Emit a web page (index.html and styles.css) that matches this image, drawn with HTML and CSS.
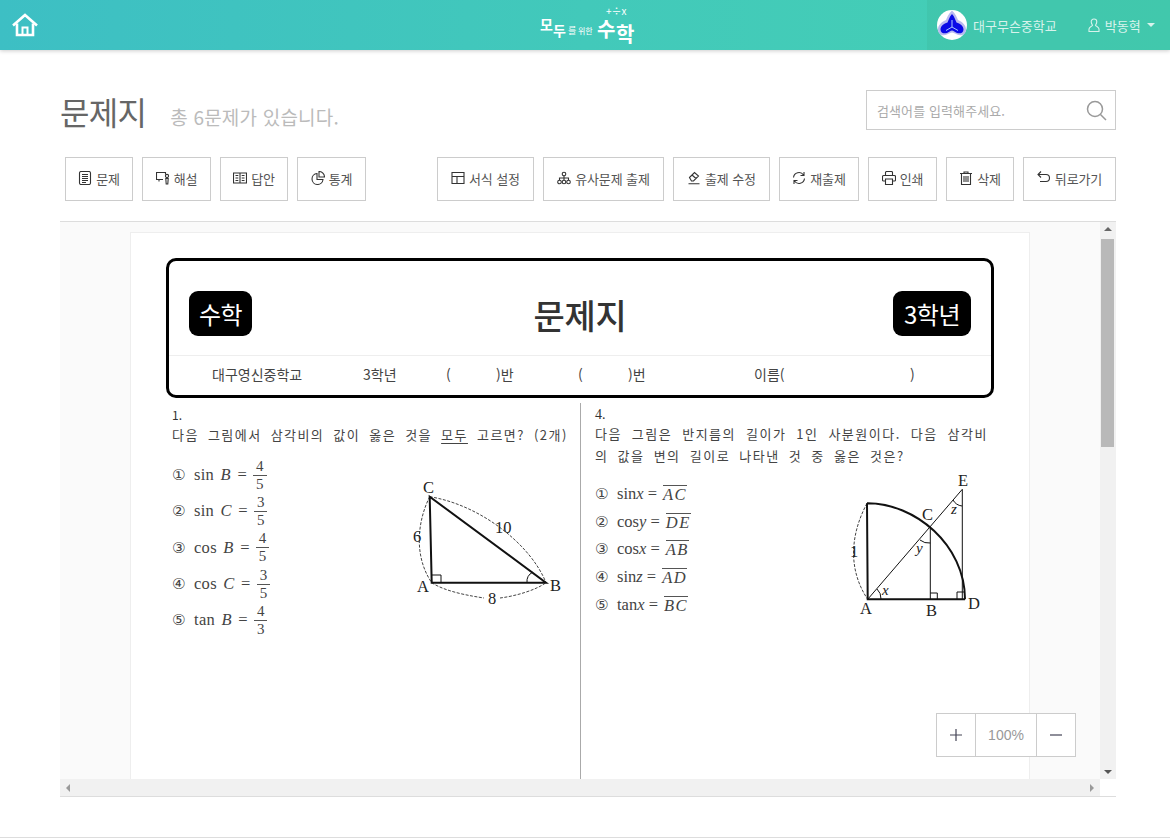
FILE: index.html
```html
<!DOCTYPE html>
<html lang="ko">
<head>
<meta charset="utf-8">
<title>문제지</title>
<link rel="stylesheet" href="styles.css">
</head>
<body>
<header class="topbar">
  <a class="home" aria-label="홈">
    <svg width="26" height="24" viewBox="0 0 26 24" fill="none" stroke="#fff" stroke-width="2.6" stroke-linejoin="miter"><path d="M1 12.500 13 2l12 10.500"/><path d="M5 10.500V22h16V10.500"/><path d="M10.500 22v-7.500h5V22" stroke-width="2"/></svg>
  </a>
  <div class="logo">
    <span class="logo-a1">모</span><span class="logo-a2">두</span><span class="logo-b">를</span><span class="logo-c">위한</span><span class="logo-d1">수</span><span class="logo-d2">학</span><span class="logo-e">+÷x</span>
  </div>
  <div class="account">
    <svg class="emblem" width="30" height="30" viewBox="0 0 30 30"><circle cx="15" cy="15" r="15" fill="#fff"/><path d="M15 .5c3.500 3 5 7 6 9.500 4 1.500 8 5 8 9.500 0 5-5 7-9 5-2-1-3.500-2-5-2s-3 1-5 2c-4 2-9 0-9-5 0-4.500 4-8 8-9.500 1-2.500 2.500-6.500 6-9.500z" fill="#b9b9ef"/><path d="M15 4c2.800 3 3.500 6.500 4.500 8.500 3.500 1 7 3.500 7 7 0 3.500-3.500 4.500-6.500 3.500-2-1-3.500-2.500-5-2.500s-3 1.500-5 2.500c-3 1-6.500 0-6.500-3.500 0-3.500 3.500-6 7-7C11.500 10.500 12.200 7 15 4z" fill="#0a0ae6"/><path d="M15 10v7M15 17l-6 3.500M15 17l6 3.500" stroke="#a8c8ff" stroke-width="1"/></svg>
    <span class="school">대구무슨중학교</span>
    <svg class="user-ic" width="12" height="15" viewBox="0 0 12 15" fill="none" stroke="#d8f3ec" stroke-width="1.100"><path d="M6 1c1.800 0 2.800 1.200 2.800 2.800 0 1.500-.8 2.600-1.300 3.400 0 .8 3.500 1.800 3.500 3.800v2.500H1V11c0-2 3.500-3 3.500-3.800C4 6.400 3.200 5.300 3.200 3.800 3.200 2.200 4.200 1 6 1z"/></svg>
    <span class="username">박동혁</span>
    <span class="caret"></span>
  </div>
</header>

<main class="page">
  <div class="title-row">
    <div class="title-group">
      <h1 class="title">문제지</h1>
      <span class="subtitle">총 6문제가 있습니다.</span>
    </div>
    <div class="search">
      <span class="search-text">검색어를 입력해주세요.</span>
      <svg width="21" height="21" viewBox="0 0 21 21" fill="none" stroke="#999" stroke-width="1.500"><circle cx="9" cy="9" r="7.500"/><path d="m14.500 14.500 5.500 5.500"/></svg>
    </div>
  </div>

  <div class="toolbar">
    <div class="btn-group group-left">
      <button class="btn"><svg class="ic" viewBox="0 0 14 14"><rect x="1.500" y=".5" width="11" height="13" rx="1.500"/><path d="M4 3.500h6M4 5.500h6M4 7.500h6M4 9.500h6M4 11.500h4"/></svg>문제</button>
      <button class="btn"><svg class="ic" viewBox="0 0 14 14"><path d="M7 8.500H.5v-7h9v2M3 8.500v2"/><circle cx="11" cy="5" r="1.600"/><path d="M9.800 7.500h2.400l-.4 5.500h-1.600z"/></svg>해설</button>
      <button class="btn"><svg class="ic" viewBox="0 0 14 14"><path d="M.5 2h13v10H.5zM7 2v10M2.500 4.500h2.800M2.500 7h2.800M2.500 9.500h2.800M8.700 4.500h2.800M8.700 7h2.800M8.700 9.500h2.800"/></svg>답안</button>
      <button class="btn"><svg class="ic" viewBox="0 0 14 14"><path d="M6 2.500A5.500 5.500 0 1 0 12 8.500H6zM8 .5v5.500h5.500A5.500 5.500 0 0 0 8 .5z"/></svg>통계</button>
    </div>
    <div class="btn-group group-right">
      <button class="btn"><svg class="ic" viewBox="0 0 14 14"><path d="M1 1.500h12v11H1zM1 5.500h12M6 5.500v7"/></svg>서식 설정</button>
      <button class="btn"><svg class="ic" viewBox="0 0 14 14"><circle cx="7" cy="3" r="1.800"/><path d="M7 4.800V7M2.500 9.300V7h9v2.300M7 7v2.300"/><circle cx="2.500" cy="11" r="1.800"/><circle cx="7" cy="11" r="1.800"/><circle cx="11.500" cy="11" r="1.800"/></svg>유사문제 출제</button>
      <button class="btn"><svg class="ic" viewBox="0 0 14 14"><path d="M2.500 6.500 7.500 1.500l4 3.500-5 5H4.500zM5 4l4 3.500M1.500 12.800h11"/></svg>출제 수정</button>
      <button class="btn"><svg class="ic" viewBox="0 0 14 14"><path d="M1.500 6.500A5.500 5.500 0 0 1 11.500 4M12.500 7.500A5.500 5.500 0 0 1 2.500 10M12 1v3.500H8.500M2 13V9.500h3.500"/></svg>재출제</button>
      <button class="btn"><svg class="ic" viewBox="0 0 14 14"><path d="M3.500 4.500v-3a1 1 0 0 1 1-1h5a1 1 0 0 1 1 1v3M3.500 10H1.500a1 1 0 0 1-1-1V5.500a1 1 0 0 1 1-1h11a1 1 0 0 1 1 1V9a1 1 0 0 1-1 1h-2M3.500 8h7v5.500h-7z"/></svg>인쇄</button>
      <button class="btn"><svg class="ic" viewBox="0 0 14 14"><path d="M1 2.500h12M5 2.500V1h4v1.500M2.500 2.500v11h9v-11M5 5v6M7 5v6M9 5v6"/></svg>삭제</button>
      <button class="btn"><svg class="ic" viewBox="0 0 14 14"><path d="M4 .5 1 3.500l3 3M1 3.500h8a3.500 3.500 0 0 1 0 7H3"/></svg>뒤로가기</button>
    </div>
  </div>

  <section class="viewer">
    <div class="viewport">
      <article class="paper">
        <div class="sheet-head">
          <div class="sheet-top">
            <span class="badge">수학</span>
            <h2 class="sheet-title">문제지</h2>
            <span class="badge badge-end">3학년</span>
          </div>
          <div class="sheet-info">
            <span>대구영신중학교</span><span>3학년</span><span>(</span><span>)반</span><span>(</span><span>)번</span><span>이름(</span><span>)</span>
          </div>
        </div>
        <div class="columns">
          <div class="col col-left">
            <div class="q-no">1.</div>
            <p class="q-text q1">다음 그림에서 삼각비의 값이 옳은 것을 <u>모두</u> 고르면? (2개)</p>
            <div class="q-body">
              <ol class="choices frac-list">
                <li><span class="n">①</span><span class="m">sin <i>B</i> =</span><span class="frac"><span>4</span><span>5</span></span></li>
                <li><span class="n">②</span><span class="m">sin <i>C</i> =</span><span class="frac"><span>3</span><span>5</span></span></li>
                <li><span class="n">③</span><span class="m">cos <i>B</i> =</span><span class="frac"><span>4</span><span>5</span></span></li>
                <li><span class="n">④</span><span class="m">cos <i>C</i> =</span><span class="frac"><span>3</span><span>5</span></span></li>
                <li><span class="n">⑤</span><span class="m">tan <i>B</i> =</span><span class="frac"><span>4</span><span>3</span></span></li>
              </ol>
              <svg class="fig fig1" width="155" height="135" viewBox="410 475 155 135">
                <path class="dash" d="M428.700 496.700C417 520 412 555 430.700 582.700M428.700 496.700C480 505 530 545 545 582.700M430.700 582.700C445 592 470 596 483 598M499 598C515 596 535 590 545 582.700"/>
                <path class="thick" d="M428.700 496.700 430.700 582.700H545L428.700 496.700z"/>
                <path class="thin" d="M431 575h9v8M526 583a11 11 0 0 1 6-11"/>
                <text x="422" y="493">C</text><text x="416" y="592">A</text><text x="549" y="591">B</text>
                <text x="494" y="533">10</text><text x="412" y="542">6</text><text x="487" y="604">8</text>
              </svg>
            </div>
          </div>
          <div class="col col-right">
            <div class="q-no q-serif">4.</div>
            <p class="q-text q4">다음 그림은 반지름의 길이가 1인 사분원이다. 다음 삼각비의 값을 변의 길이로 나타낸 것 중 옳은 것은?</p>
            <div class="q-body">
              <ol class="choices line-list">
                <li><span class="n">①</span><span class="m">sin<i>x</i> =</span><span class="over"><i>AC</i></span></li>
                <li><span class="n">②</span><span class="m">cos<i>y</i> =</span><span class="over"><i>DE</i></span></li>
                <li><span class="n">③</span><span class="m">cos<i>x</i> =</span><span class="over"><i>AB</i></span></li>
                <li><span class="n">④</span><span class="m">sin<i>z</i> =</span><span class="over"><i>AD</i></span></li>
                <li><span class="n">⑤</span><span class="m">tan<i>x</i> =</span><span class="over"><i>BC</i></span></li>
              </ol>
              <svg class="fig fig2" width="135" height="150" viewBox="845 470 135 150">
                <path class="dash" d="M867 503.300C850 535 848 570 867.700 599.300"/>
                <path class="thick" d="M867 503.300 867.700 599.300H965M867 503.300C915 503 965 545 965 599.300"/>
                <path class="thin" d="M867.700 599.300 962.300 489.300V599.300M930.300 527.700V599.300M930.300 593h7v6M957 592h8M957 592v7M881 599a13 13 0 0 0-4-10M920 540a14 14 0 0 0 10.300 3M953 500a12 12 0 0 0 9 6"/>
                <text x="958" y="486">E</text><text x="922" y="520">C</text><text x="860" y="614">A</text><text x="926" y="616">B</text><text x="968" y="609">D</text><text x="850" y="557">1</text>
                <text class="it" x="916" y="553">y</text><text class="it" x="951" y="514">z</text><text class="it" x="882" y="595">x</text>
              </svg>
            </div>
          </div>
        </div>
      </article>
    </div>
    <div class="vbar">
      <span class="arrow up"></span>
      <div class="vtrack"><div class="vthumb"></div></div>
      <span class="arrow down"></span>
    </div>
    <div class="hbar">
      <span class="arrow left"></span>
      <span class="arrow right"></span>
    </div>
    <div class="corner"></div>
    <div class="zoom-ctl">
      <button class="zoom-btn"><svg width="12" height="12" viewBox="0 0 12 12" stroke="#445" stroke-width="1.200"><path d="M0 6h12M6 0v12"/></svg></button>
      <span class="zoom-val">100%</span>
      <button class="zoom-btn"><svg width="12" height="12" viewBox="0 0 12 12" stroke="#445" stroke-width="1.200"><path d="M0 6h12"/></svg></button>
    </div>
  </section>
</main>
<footer class="foot"></footer>
</body>
</html>
```
FILE: styles.css
```css
* { box-sizing: border-box; }
html, body { margin: 0; height: 100%; }
body {
  display: flex;
  flex-direction: column;
  height: 100vh;
  overflow: hidden;
  background: #fff;
  font-family: "Noto Sans CJK KR", "Noto Sans", sans-serif;
  color: #333;
}

/* top bar */
.topbar {
  position: relative;
  flex: none;
  height: 50px;
  display: flex;
  align-items: center;
  justify-content: space-between;
  background: linear-gradient(90deg, #3dbfc4 0%, #42c9ba 50%, #45d0b4 100%);
  box-shadow: 0 1px 4px rgba(0, 0, 0, .2);
}
.home { display: flex; margin: 0 0 0 12px; }
.logo {
  position: absolute;
  left: 540px;
  top: 0;
  width: 100px;
  height: 50px;
  color: #fff;
  font-weight: 700;
  white-space: nowrap;
}
.logo span { position: absolute; line-height: 1; }
.logo-a1 { left: 0; top: 17px; font-size: 14px; }
.logo-a2 { left: 13px; top: 23px; font-size: 14px; }
.logo-b { left: 28px; top: 26px; font-size: 9px; font-weight: 400; }
.logo-c { left: 38px; top: 27px; font-size: 8px; font-weight: 400; }
.logo-d1 { left: 57px; top: 19px; font-size: 20px; }
.logo-d2 { left: 76px; top: 24px; font-size: 20px; }
.logo-e { left: 66px; top: 6px; font-size: 10px; font-weight: 400; }
.account {
  width: 243px;
  height: 50px;
  display: flex;
  align-items: center;
  padding-left: 10px;
  background: rgba(50, 160, 130, .16);
  color: #d8f3ec;
  font-size: 13px;
}
.emblem { flex: none; }
.school { margin-left: 6px; }
.user-ic { margin-left: 31px; }
.username { margin-left: 5px; }
.caret {
  margin-left: 6px;
  border: 4px solid transparent;
  border-top: 4px solid #d8f3ec;
  border-bottom: 0;
}

/* page */
.page {
  flex: 1;
  min-height: 0;
  padding: 40px 54px 0 60px;
  display: flex;
  flex-direction: column;
}
.title-row {
  display: flex;
  justify-content: space-between;
  align-items: flex-start;
  height: 40px;
}
.title-group { display: flex; align-items: baseline; gap: 24px; height: 48px; margin-top: -3px; }
.title { margin: 0; font-size: 32px; font-weight: 400; line-height: 48px; color: #666; letter-spacing: -.7px; }
.subtitle { font-size: 19px; color: #bbb; letter-spacing: .2px; }
.search {
  width: 250px;
  height: 40px;
  display: flex;
  align-items: center;
  justify-content: space-between;
  padding: 0 8px 0 10px;
  border: 1px solid #ccc;
}
.search-text { font-size: 13px; color: #aaa; letter-spacing: .1px; }

.toolbar {
  margin-top: 27px;
  padding-left: 5px;
  display: flex;
  justify-content: space-between;
}
.btn-group { display: grid; gap: 9px; }
.group-left { grid-template-columns: 68px 69px 68px 69px; }
.group-right { grid-template-columns: 97px 121px 97px 80px 69px 68px 93px; }
.btn {
  height: 44px;
  padding: 0 0 2px;
  display: flex;
  align-items: center;
  justify-content: center;
  gap: 4px;
  background: #fff;
  border: 1px solid #ccc;
  font: inherit;
  font-size: 13px;
  color: #555;
  letter-spacing: -.1px;
}
.ic {
  width: 14px;
  height: 14px;
  fill: none;
  stroke: #333;
  stroke-width: 1.100;
}

/* viewer */
.viewer {
  position: relative;
  margin-top: 20px;
  height: 576px;
  display: grid;
  grid-template-columns: 1fr 16px;
  grid-template-rows: 1fr 17px;
  border-top: 1px solid #ddd;
  border-bottom: 1px solid #ddd;
}
.viewport {
  overflow: hidden;
  background: #fafafa;
  padding: 10px 70px 0;
}
.paper {
  height: 640px;
  padding: 25px 35px 0;
  background: #fff;
  border: 1px solid #eee;
}
.sheet-head {
  height: 140px;
  border: 3px solid #000;
  border-radius: 10px;
}
.sheet-top {
  height: 95px;
  display: grid;
  grid-template-columns: 1fr auto 1fr;
  align-items: center;
  padding: 10px 20px 0;
  border-bottom: 1px solid #eee;
}
.badge {
  justify-self: start;
  height: 45px;
  padding: 0 10px;
  display: flex;
  align-items: center;
  background: #000;
  color: #fff;
  border-radius: 9px;
  font-size: 24px;
  letter-spacing: -.5px;
}
.badge-end { justify-self: end; padding: 0 11px; }
.sheet-title { margin: 0 0 -3px; font-size: 34px; font-weight: 500; color: #333; letter-spacing: -.2px; }
.sheet-info {
  height: 39px;
  padding: 0 0 3px 43px;
  display: grid;
  grid-template-columns: 151px 83px 50px 82px 50px 126px 156px 1fr;
  align-items: center;
  font-size: 14px;
  color: #444;
}

.columns { display: flex; height: 400px; margin-top: 5px; }
.col { flex: none; height: 100%; }
.col-left { width: 415px; padding: 4px 0 0 6px; border-right: 1px solid #aaa; }
.col-right { width: 413px; padding: 4px 6px 0 14px; }
.q-no { font-size: 12px; line-height: 16px; color: #333; }
.q-serif { font-family: "Liberation Serif", serif; font-size: 14px; }
.q-text { margin: 0; font-size: 13px; color: #444; text-align: justify; }
.q1 { margin-top: 2px; line-height: 20px; letter-spacing: 1.450px; word-spacing: 4px; white-space: nowrap; }
.q1 u { text-underline-offset: 3px; }
.q4 { line-height: 22px; width: 393px; letter-spacing: 1.500px; word-spacing: 4px; word-break: break-all; }
.q-body { display: flex; justify-content: space-between; align-items: flex-start; }
.choices {
  list-style: none;
  margin: 0;
  padding: 0;
  font-family: "Liberation Serif", serif;
  font-size: 16.500px;
  color: #444;
}
.choices li { display: flex; align-items: center; }
.n { width: 22px; font-family: "DejaVu Sans", sans-serif; font-size: 15px; }
.m { white-space: pre; margin-right: 6px; }
.frac-list .m { letter-spacing: .3px; word-spacing: 2px; }
.frac-list { margin-top: 12px; }
.frac-list li { height: 36.300px; }
.frac { display: inline-flex; flex-direction: column; align-items: center; font-size: 15px; line-height: 17px; }
.frac span:first-child { border-bottom: 1px solid #555; padding: 0 3px; }
.line-list { margin-top: 13px; }
.line-list li { height: 27.700px; }
.over { border-top: 1px solid #555; line-height: 17px; letter-spacing: 1.500px; }
.fig { flex: none; fill: #222; font-family: "Liberation Serif", serif; font-size: 16.500px; }
.fig1 { margin: 30px 14px 0 0; }
.fig2 { margin: 3px 8px 0 0; }
.fig .it { font-style: italic; font-size: 15px; }
.fig path { fill: none; stroke: #111; }
.fig .thick { stroke-width: 2; }
.fig .thin { stroke-width: 1; }
.fig .dash { stroke-width: 1; stroke-dasharray: 3 1.500; stroke: #444; }

/* scrollbars */
.vbar {
  grid-column: 2;
  grid-row: 1;
  display: flex;
  flex-direction: column;
  align-items: center;
  background: #f1f1f1;
}
.vtrack { flex: 1; width: 100%; }
.vthumb { height: 208px; margin: 8px 2px 0 1px; background: #b9b9b9; }
.hbar {
  grid-column: 1;
  grid-row: 2;
  display: flex;
  align-items: center;
  justify-content: space-between;
  padding: 0 6px;
  background: #f1f1f1;
}
.corner { background: #fff; }
.arrow { flex: none; width: 0; height: 0; border: 4px solid transparent; }
.arrow.up { margin: 5px 0 0; border-top: 0; border-bottom-color: #666; }
.arrow.down { margin: 0 0 5px; border-bottom: 0; border-top-color: #555; }
.arrow.left { border-left: 0; border-right-color: #999; }
.arrow.right { border-right: 0; border-left-color: #999; }

/* zoom control */
.zoom-ctl {
  position: absolute;
  left: 876px;
  top: 491px;
  width: 140px;
  height: 44px;
  display: flex;
  background: #fff;
  border: 1px solid #ccc;
}
.zoom-btn {
  flex: none;
  width: 38px;
  padding: 0;
  display: flex;
  align-items: center;
  justify-content: center;
  background: #fff;
  border: 0;
}
.zoom-val {
  flex: 1;
  display: flex;
  align-items: center;
  justify-content: center;
  border-left: 1px solid #ccc;
  border-right: 1px solid #ccc;
  font-family: "Liberation Sans", sans-serif;
  font-size: 14px;
  color: #999;
}

.foot { flex: none; height: 1px; background: #ddd; }
```
